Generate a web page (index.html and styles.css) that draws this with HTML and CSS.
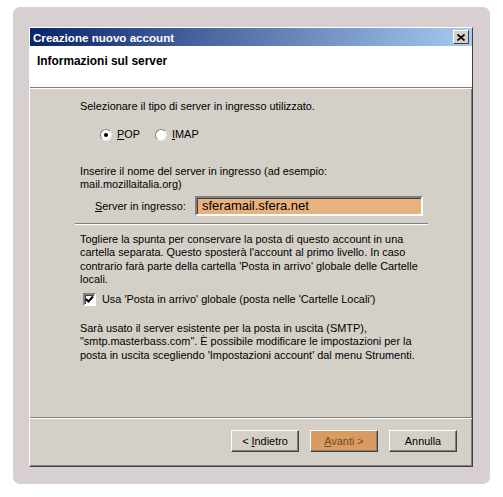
FILE: index.html
```html
<!DOCTYPE html>
<html lang="it">
<head>
    <meta charset="UTF-8">
    <title>Creazione nuovo account</title>
    <link rel="stylesheet" href="styles.css">
</head>
<body>
    <div class="frame">
        <div class="dialog">
            <div class="titlebar">
                <span class="title">Creazione nuovo account</span>
                <span class="close">
                    <svg width="8" height="7" viewBox="0 0 8 7">
                        <path d="M0.5 0.5 L7.5 6.5 M7.5 0.5 L0.5 6.5" stroke="#000" stroke-width="1.6" fill="none"/>
                    </svg>
                </span>
            </div>
            <div class="header">Informazioni sul server</div>

            <div class="content">
                <p class="intro">Selezionare il tipo di server in ingresso utilizzato.</p>
                <div class="radios">
                    <span class="radio checked"></span><span class="radio-label"><u>P</u>OP</span>
                    <span class="radio"></span><span class="radio-label"><u>I</u>MAP</span>
                </div>

                <p class="hint">Inserire il nome del server in ingresso (ad esempio:<br>mail.mozillaitalia.org)</p>
                <div class="server-row">
                    <label class="server-label"><u>S</u>erver in ingresso:</label>
                    <div class="field">sferamail.sfera.net</div>
                </div>

                <div class="sep"></div>

                <p class="note">Togliere la spunta per conservare la posta di questo account in una<br>cartella separata. Questo sposterà l'account al primo livello. In caso<br>contrario farà parte della cartella 'Posta in arrivo' globale delle Cartelle<br>locali.</p>
                <div class="check-row">
                    <span class="checkbox">
                        <svg width="9" height="9" viewBox="0 0 9 9">
                            <path d="M1 4 L3.5 6.5 L8 1.5" stroke="#000" stroke-width="2" fill="none"/>
                        </svg>
                    </span>
                    <span>Usa 'Posta in arrivo' globale (posta nelle 'Cartelle Locali')</span>
                </div>

                <p class="smtp">Sarà usato il server esistente per la posta in uscita (SMTP),<br>"smtp.masterbass.com". È possibile modificare le impostazioni per la<br>posta in uscita scegliendo 'Impostazioni account' dal menu Strumenti.</p>
            </div>

            <div class="footer">
                <button class="btn">&lt; <u>I</u>ndietro</button>
                <button class="btn btn-next"><u>A</u>vanti &gt;</button>
                <button class="btn">Annulla</button>
            </div>
        </div>
    </div>
</body>
</html>
```

FILE: styles.css
```css
body {
    margin: 0;
    background: #fff;
    font-family: "Liberation Sans", Arial, sans-serif;
    font-size: 10.9px;
    color: #000;
}
.frame {
    margin: 7px 0 0 13px;
    width: 477px;
    height: 477px;
    background: #d8d0d0;
    border-radius: 7px;
    padding: 20px 0 0 16px;
    box-sizing: border-box;
}
.dialog {
    width: 444px;
    height: 440px;
    box-sizing: border-box;
    background: #d4d0c8;
    border: 1px solid;
    border-color: #fff #404040 #404040 #fff;
    box-shadow: inset -1px -1px #808080;
    display: flex;
    flex-direction: column;
}
.titlebar {
    height: 18px;
    background: linear-gradient(to right, #0a246a, #a6caf0);
    display: flex;
    align-items: center;
    justify-content: space-between;
    padding: 0 3px 0 3px;
}
.title {
    color: #fff;
    font-weight: bold;
    font-size: 11.6px;
}
.close {
    width: 16px;
    height: 14px;
    box-sizing: border-box;
    background: #d4d0c8;
    border: 1px solid;
    border-color: #fff #404040 #404040 #fff;
    display: flex;
    align-items: center;
    justify-content: center;
}
.header {
    height: 42px;
    box-sizing: border-box;
    background: #fff;
    padding: 9px 0 0 7px;
    font-weight: bold;
    font-size: 11.9px;
    line-height: 13px;
    border-bottom: 1px solid #808080;
    box-shadow: 0 1px #fff;
}
.content {
    flex: 1;
    padding: 0 44px 0 45px;
    line-height: 13px;
}
.content p {
    margin: 0;
    padding-left: 5px;
    white-space: nowrap;
}
.intro {
    margin-top: 12px !important;
}
.radios {
    display: flex;
    align-items: center;
    height: 13px;
    margin-top: 15px;
    padding-left: 25px;
}
.radio {
    width: 12px;
    height: 12px;
    box-sizing: border-box;
    border-radius: 50%;
    background: #fff;
    border: 1px solid;
    border-color: #808080 #e8e8e8 #e8e8e8 #808080;
    display: flex;
    align-items: center;
    justify-content: center;
}
.radio.checked::after {
    content: "";
    width: 4px;
    height: 4px;
    border-radius: 50%;
    background: #000;
}
.radio-label {
    margin: 0 15px 0 5px;
}
.hint {
    margin-top: 24px !important;
}
.server-row {
    display: flex;
    align-items: center;
    margin-top: 5px;
    padding-left: 20px;
}
.server-label {
    width: 100px;
}
.field {
    width: 228px;
    height: 20px;
    box-sizing: border-box;
    background: #e8b27e;
    border: 2px solid;
    border-color: #808080 #fff #fff #808080;
    box-shadow: inset 1px 1px #404040;
    padding: 0 0 0 5px;
    font-size: 13px;
    line-height: 16px;
}
.sep {
    margin-top: 7px;
    height: 1px;
    background: #808080;
    border-bottom: 1px solid #fff;
}
.note {
    margin-top: 8px !important;
    line-height: 13.4px;
}
.check-row {
    display: flex;
    align-items: center;
    gap: 6px;
    margin-top: 6px;
    padding-left: 8px;
}
.checkbox {
    width: 13px;
    height: 13px;
    box-sizing: border-box;
    background: #fff;
    border: 2px solid;
    border-color: #808080 #fff #fff #808080;
    box-shadow: inset 1px 1px #404040;
    display: flex;
    align-items: center;
    justify-content: center;
}
.smtp {
    margin-top: 16px !important;
    line-height: 13.8px;
}
.footer {
    height: 49px;
    box-sizing: border-box;
    border-top: 1px solid #808080;
    box-shadow: inset 0 1px #fff;
    display: flex;
    justify-content: flex-end;
    gap: 11px;
    padding: 12px 15px 0 0;
}
.btn {
    width: 68px;
    height: 22px;
    box-sizing: border-box;
    background: #d4d0c8;
    border: 1px solid;
    border-color: #fff #404040 #404040 #fff;
    box-shadow: inset -1px -1px #808080;
    font-family: "Liberation Sans", Arial, sans-serif;
    font-size: 10.9px;
    color: #000;
    padding: 0;
}
.btn-next {
    background: #d99b60;
    color: #6e4c2c;
}
```
